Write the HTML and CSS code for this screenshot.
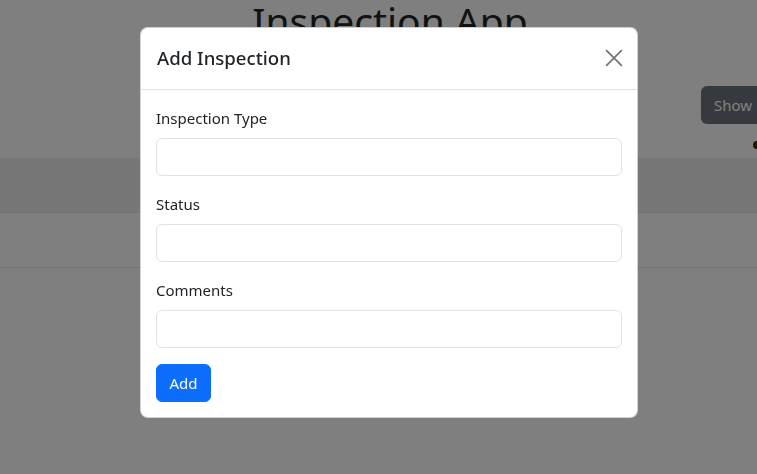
FILE: index.html
```html
<!DOCTYPE html>
<html lang="en">
<head>
<meta charset="utf-8">
<title>Inspection App</title>
<link rel="stylesheet" href="styles.css">
</head>
<body>
<div class="page">
  <h1 class="title">Inspection App</h1>
  <div class="toolbar">
    <button class="btn btn-secondary" type="button">Show Form</button>
  </div>
  <div class="marker-row"><span class="marker"></span></div>
  <table class="table">
    <thead>
      <tr><th>Type</th><th>Status</th><th>Comments</th></tr>
    </thead>
    <tbody>
      <tr><td></td><td></td><td></td></tr>
    </tbody>
  </table>
</div>

<div class="backdrop"></div>

<div class="modal" role="dialog" aria-labelledby="modal-title">
  <div class="modal-header">
    <h5 class="modal-title" id="modal-title">Add Inspection</h5>
    <button class="btn-close" type="button" aria-label="Close">
      <svg viewBox="0 0 16 16" width="16" height="16" aria-hidden="true">
        <path d="M1 1 L15 15 M15 1 L1 15" stroke="#000" stroke-width="1.5" fill="none"/>
      </svg>
    </button>
  </div>
  <form class="modal-body">
    <div class="field">
      <label class="form-label" for="type">Inspection Type</label>
      <input class="form-control" id="type" type="text">
    </div>
    <div class="field">
      <label class="form-label" for="status">Status</label>
      <input class="form-control" id="status" type="text">
    </div>
    <div class="field">
      <label class="form-label" for="comments">Comments</label>
      <input class="form-control" id="comments" type="text">
    </div>
    <button class="btn btn-primary" type="button">Add</button>
  </form>
</div>
</body>
</html>
```

FILE: styles.css
```css
* { box-sizing: border-box; }

html, body {
  margin: 0;
  padding: 0;
  width: 757px;
  height: 474px;
  overflow: hidden;
  background: #fff;
  font-family: "Noto Sans", "Open Sans", sans-serif;
  font-size: 15px;
  line-height: 1.5;
  color: #212529;
}

.page {
  width: 780px;
}

.title {
  margin: -3px 0 0;
  text-align: center;
  font-size: 39px;
  font-weight: 400;
  line-height: 48px;
  color: #212529;
}

.toolbar {
  display: flex;
  justify-content: flex-start;
  padding: 41px 0 0 701px;
}

.toolbar .btn {
  white-space: nowrap;
}

.marker-row {
  height: 34px;
  display: flex;
  justify-content: flex-end;
  padding-right: 19px;
  padding-top: 17px;
}

.marker {
  width: 8px;
  height: 8px;
  border-radius: 50%;
  background: #3a2a10;
}

.table {
  width: 100%;
  border-collapse: collapse;
}

.table th {
  height: 54px;
  background: #eeeeee;
  color: transparent;
  border-bottom: 1px solid #dee2e6;
  text-align: left;
  padding: 0 8px;
}

.table td {
  height: 55px;
  border-bottom: 1px solid #dee2e6;
}

.btn {
  display: inline-block;
  font-family: inherit;
  font-size: 15px;
  line-height: 24px;
  padding: 6px 12px;
  border: 1px solid transparent;
  border-radius: 6px;
  cursor: pointer;
}

.btn-secondary {
  background: #6c757d;
  color: #fff;
}

.btn-primary {
  background: #0d6efd;
  border-color: #0d6efd;
  color: #fff;
}

.backdrop {
  position: fixed;
  inset: 0;
  background: rgba(0, 0, 0, 0.5);
}

.modal {
  position: fixed;
  left: 140px;
  top: 27px;
  width: 498px;
  background: #fff;
  border: 1px solid rgba(0, 0, 0, 0.175);
  border-radius: 8px;
}

.modal-header {
  display: flex;
  align-items: center;
  justify-content: space-between;
  padding: 15px 16px 16px;
  border-bottom: 1px solid #dee2e6;
}

.modal-title {
  margin: 0;
  font-size: 18.6px;
  font-weight: 500;
  line-height: 30px;
  color: #212529;
}

.btn-close {
  width: 24px;
  height: 24px;
  padding: 0;
  margin-right: -5px;
  border: 0;
  background: transparent;
  opacity: 0.55;
  display: flex;
  align-items: center;
  justify-content: center;
  cursor: pointer;
}

.btn-close svg { display: block; width: 18px; height: 18px; }

.modal-body {
  display: flex;
  flex-direction: column;
  align-items: flex-start;
  padding: 16px 15px 15px;
}

.field {
  width: 100%;
  margin-bottom: 16px;
}

.form-label {
  display: block;
  margin-bottom: 8px;
  font-size: 15px;
  line-height: 24px;
  color: #212529;
}

.form-control {
  display: block;
  width: 100%;
  height: 38px;
  padding: 6px 12px;
  font-family: inherit;
  font-size: 15px;
  border: 1px solid #dee2e6;
  border-radius: 6px;
  background: #fff;
  color: #212529;
}

.modal-body .btn-primary {
  width: 55px;
  text-align: center;
  padding: 6px 0;
}
```
